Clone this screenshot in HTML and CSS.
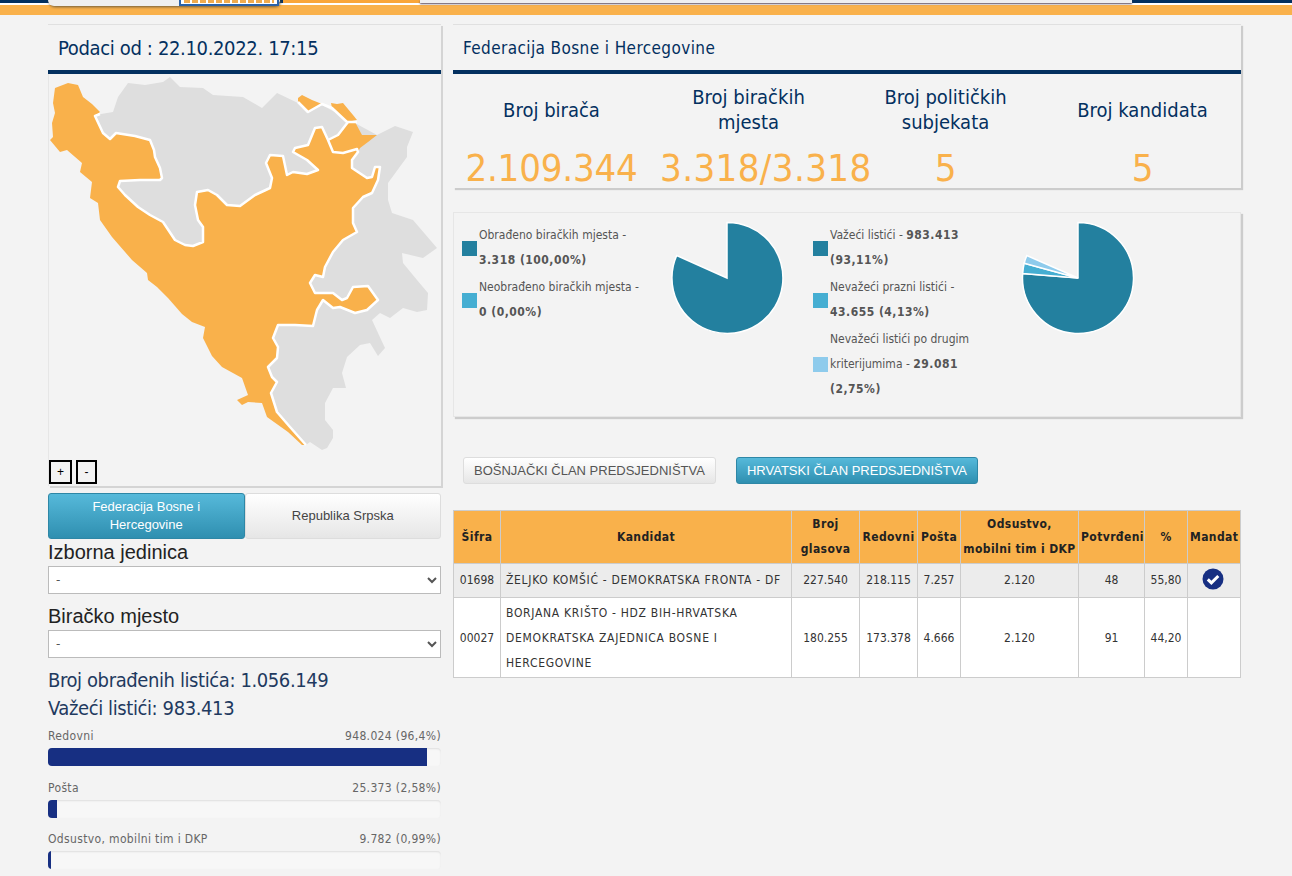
FILE: index.html
```html
<!DOCTYPE html>
<html>
  <head>
    <meta charset="utf-8">
    <link rel="stylesheet" href="styles.css">
  </head>
  <body>
    <div class="topbar">
      <div class="top-card"><div class="top-logo"><div class="top-logo-bits"></div></div></div>
      <div class="top-orange"></div>
      <div class="top-nav"></div>
    </div>

    <div class="content">
      <div class="left">
        <div class="panel map-panel">
          <div class="panel-head head-big">Podaci od : 22.10.2022. 17:15</div>
          <div class="map">
            <svg class="map-svg" viewBox="48 74 393 412" width="393" height="412">
              <path class="land-gray" d="M95 115 113 112 118 97 128 83 145 85 163 82 170 77 180 87 203 88 213 95 243 97 262 108 277 93 298 103 307 113 322 105 353 122 377 135 395 126 413 132 407 147 407 157 388 183 388 200 392 213 413 220 437 248 430 253 423 258 402 253 403 263 417 280 428 293 427 310 417 312 403 308 390 318 380 313 372 320 378 333 385 348 378 356 370 343 360 345 347 357 342 373 346 388 333 388 325 403 325 420 333 430 333 438 327 448 322 450 310 442 306 445 250 380 200 300 110 190 90 130Z"/>
              <path class="land-orange" d="M55 88 68 83 78 85 83 97 92 104 100 112 95 116 103 133 110 139 116 133 135 136 150 140 154 150 155 157 160 168 162 178 160 180 140 180 120 181 118 187 125 195 138 207 150 215 163 222 175 240 185 245 193 246 203 242 203 227 198 220 195 205 197 192 208 190 217 195 227 205 240 206 255 195 270 188 272 178 266 163 270 155 283 156 287 175 293 172 307 174 318 170 307 160 293 152 295 148 308 145 315 128 322 127 328 140 338 135 348 122 355 122 362 135 377 135 368 142 360 148 358 152 352 160 352 168 367 178 372 177 375 167 380 167 378 180 372 193 363 197 353 208 353 223 357 232 343 240 333 252 325 267 323 277 315 275 310 283 315 293 333 293 342 300 347 298 353 287 368 286 378 300 367 310 355 313 340 307 333 308 323 300 317 310 313 326 295 325 278 325 273 338 278 347 277 358 268 367 272 377 277 382 271 393 277 412 290 427 306 445 302 445 288 432 267 417 262 403 248 402 242 405 237 400 248 395 242 378 222 367 212 356 203 338 205 327 192 322 182 314 168 298 157 287 148 280 147 273 132 260 112 237 100 220 98 203 90 198 92 182 80 172 82 163 67 150 60 152 50 140 53 137 52 123 55 113 53 103Z"/>
              <path class="land-orange" d="M298 98 302 95 312 100 322 104 308 112 298 102Z"/>
              <path class="land-orange" d="M331 103 337 104 343 103 353 115 357 120 347 122 332 108Z"/>
              <path class="land-line" d="M100 114 95 116 103 133 110 139 116 133 135 136 150 140 154 150 155 157 160 168 162 178 160 180 140 180 120 181 118 187 125 195 138 207 150 215 163 222 175 240 185 245 193 246 203 242 203 227 198 220 195 205 197 192 208 190 217 195 227 205 240 206 255 195 270 188 272 178 266 163 270 155 283 156 287 175 293 172 307 174 318 170 307 160 293 152 295 148 308 145 315 128 322 127 328 140 333 152 343 153 357 149 358 152 352 160 352 168 367 178 372 177 375 167 380 167 378 180 372 193 363 197 353 208 353 223 357 232 343 240 333 252 325 267 323 277 315 275 310 283 315 293 333 293 342 300 347 298 353 287 368 286 378 300 367 310 355 313 340 307 333 308 323 300 317 310 313 326 295 325 278 325 273 338 278 347 277 358 268 367 272 377 277 382 271 393 277 412 290 427 306 445"/>
              <path class="land-line" d="M328 140 338 135 348 122"/>
              <path class="land-line" d="M298 102 308 112 322 104 332 108 347 122 357 122"/>
            </svg>
            <div class="zoom-btns">
              <span class="zoom-btn">+</span>
              <span class="zoom-btn zoom-minus">-</span>
            </div>
          </div>
        </div>

        <div class="entity-tabs">
          <div class="tab tab-active">Federacija Bosne i<br>Hercegovine</div>
          <div class="tab">Republika Srpska</div>
        </div>

        <div class="field-label">Izborna jedinica</div>
        <select class="field-select"><option>-</option></select>
        <div class="field-label second">Biračko mjesto</div>
        <select class="field-select"><option>-</option></select>

        <div class="count-line first">Broj obrađenih listića: 1.056.149</div>
        <div class="count-line">Važeći listići: 983.413</div>

        <div class="progress-row">
          <div class="progress-text"><span>Redovni</span><span>948.024 (96,4%)</span></div>
          <div class="progress"><div class="progress-fill" style="width: 96.4%"></div></div>
        </div>
        <div class="progress-row">
          <div class="progress-text"><span>Pošta</span><span>25.373 (2,58%)</span></div>
          <div class="progress"><div class="progress-fill" style="width: 2.4%"></div></div>
        </div>
        <div class="progress-row">
          <div class="progress-text"><span>Odsustvo, mobilni tim i DKP</span><span>9.782 (0,99%)</span></div>
          <div class="progress"><div class="progress-fill" style="width: 0.8%"></div></div>
        </div>
      </div>

      <div class="right">
        <div class="panel stats-panel">
          <div class="panel-head head-wide">Federacija Bosne i Hercegovine</div>
          <div class="stats">
            <div class="stat"><div class="stat-label">Broj birača</div><div class="stat-value">2.109.344</div></div>
            <div class="stat"><div class="stat-label">Broj biračkih<br>mjesta</div><div class="stat-value stat-wide">3.318/3.318</div></div>
            <div class="stat"><div class="stat-label">Broj političkih<br>subjekata</div><div class="stat-value">5</div></div>
            <div class="stat"><div class="stat-label">Broj kandidata</div><div class="stat-value">5</div></div>
          </div>
        </div>

        <div class="panel charts-panel">
          <div class="chart">
            <div class="legend">
              <div class="legend-row"><i class="swatch sw-dark"></i><div>Obrađeno biračkih mjesta -<br><b>3.318 (100,00%)</b></div></div>
              <div class="legend-row"><i class="swatch sw-mid"></i><div>Neobrađeno biračkih mjesta -<br><b>0 (0,00%)</b></div></div>
            </div>
            <svg class="pie" viewBox="0 0 114 114" width="114" height="114">
              <path class="slice-dark" d="M57 57 57 1.5A55.5 55.5 0 1 1 6.700 34.500Z"/>
            </svg>
          </div>
          <div class="chart">
            <div class="legend">
              <div class="legend-row"><i class="swatch sw-dark"></i><div>Važeći listići - <b>983.413</b><br><b>(93,11%)</b></div></div>
              <div class="legend-row"><i class="swatch sw-mid"></i><div>Nevažeći prazni listići -<br><b>43.655 (4,13%)</b></div></div>
              <div class="legend-row"><i class="swatch sw-light"></i><div>Nevažeći listići po drugim<br>kriterijumima - <b>29.081</b><br><b>(2,75%)</b></div></div>
            </div>
            <svg class="pie" viewBox="0 0 114 114" width="114" height="114">
              <path class="slice-dark" d="M57 57 57 1.5A55.5 55.5 0 1 1 1.700 52.500Z"/>
              <path class="slice-mid" d="M57 57 1.700 52.500A55.5 55.5 0 0 1 3.200 42.300Z"/>
              <path class="slice-light" d="M57 57 3.200 42.300A55.5 55.5 0 0 1 5.800 34.500Z"/>
            </svg>
          </div>
        </div>

        <div class="member-btns">
          <div class="member-btn">BOŠNJAČKI ČLAN PREDSJEDNIŠTVA</div>
          <div class="member-btn member-active">HRVATSKI ČLAN PREDSJEDNIŠTVA</div>
        </div>

        <table class="results">
          <thead>
            <tr>
              <th class="c-code">Šifra</th>
              <th class="c-name">Kandidat</th>
              <th class="c-votes">Broj<br>glasova</th>
              <th class="c-reg">Redovni</th>
              <th class="c-post">Pošta</th>
              <th class="c-abs">Odsustvo,<br>mobilni tim i DKP</th>
              <th class="c-conf">Potvrđeni</th>
              <th class="c-pct">%</th>
              <th class="c-man">Mandat</th>
            </tr>
          </thead>
          <tbody>
            <tr class="row-grey">
              <td>01698</td>
              <td class="name">ŽELJKO KOMŠIĆ - DEMOKRATSKA FRONTA - DF</td>
              <td>227.540</td><td>218.115</td><td>7.257</td><td>2.120</td><td>48</td><td>55,80</td>
              <td class="mandat">
                <svg class="check" viewBox="0 0 22 22" width="22" height="22">
                  <circle cx="11" cy="11" r="10.5" fill="#172f82"/>
                  <path d="M5.800 11.300 9.400 14.800 16.300 8" fill="none" stroke="#fff" stroke-width="3"/>
                </svg>
              </td>
            </tr>
            <tr class="row-tall">
              <td>00027</td>
              <td class="name">BORJANA KRIŠTO - HDZ BIH-HRVATSKA<br>DEMOKRATSKA ZAJEDNICA BOSNE I<br>HERCEGOVINE</td>
              <td>180.255</td><td>173.378</td><td>4.666</td><td>2.120</td><td>91</td><td>44,20</td>
              <td></td>
            </tr>
          </tbody>
        </table>
      </div>
    </div>
  </body>
</html>
```

FILE: styles.css
```css
* {
  box-sizing: border-box;
}

body {
  margin: 0;
  background: #f3f3f3;
  font-family: "DejaVu Sans Condensed", "DejaVu Sans", sans-serif;
  font-size: 12px;
  color: #555;
  overflow: hidden;
}

/* Top strip, cut off by the scroll position */
.topbar {
  position: relative;
  height: 15px;
  background: #f9b14b;
  border-top: 3px solid #03305f;
  box-shadow: inset 0 2px 0 #fff;
}

.top-card {
  position: absolute;
  top: -3px;
  left: 48px;
  width: 232px;
  height: 6px;
  background: #efefef;
  border-radius: 0 0 6px 6px;
  box-shadow: 1px 1px 3px #6b5a3a;
}

.top-logo {
  position: absolute;
  left: 131px;
  top: 0;
  width: 100px;
  height: 6px;
  padding: 0 3px;
  background: #fff;
  border: 2px solid #2a62a8;
  border-top: 0;
}

.top-logo-bits {
  height: 3px;
  background: repeating-linear-gradient(90deg, #f0ab4e 0 6px, #fff 6px 8px);
}

.top-orange {
  position: absolute;
  top: -3px;
  left: 283px;
  width: 137px;
  height: 3px;
  background: #f9a63a;
}

.top-nav {
  position: absolute;
  top: -3px;
  left: 420px;
  width: 712px;
  height: 3px;
  background: #efefef;
  box-shadow: 0 1px 2px #5a4a5a;
}

.content {
  display: flex;
  gap: 12px;
  padding: 9px 0 0 48px;
}

.left {
  width: 393px;
}

.right {
  width: 788px;
}

/* Panels */
.panel {
  background: #f3f3f3;
  border-top: 1px solid #e0e0e0;
  box-shadow: 2px 2px 1px #ccc;
}

.panel-head {
  height: 49px;
  padding: 0 10px;
  border-bottom: 4px solid #03305f;
  font-size: 16px;
  line-height: 46px;
  color: #03305f;
}

.head-big {
  font-size: 20px;
  letter-spacing: -0.35px;
}

.head-wide {
  font-size: 17px;
  letter-spacing: 0.4px;
}

.map-panel {
  height: 462px;
  box-shadow: 2px 2px 0 #d4d4d4;
}

.map {
  position: relative;
  height: 412px;
  border-left: 1px solid #e6e6e6;
}

.map-svg {
  display: block;
  margin-left: -1px;
}

.land-gray {
  fill: #dedede;
}

.land-orange {
  fill: #f9b14b;
}

.land-line {
  fill: none;
  stroke: #fff;
  stroke-width: 2.5;
  stroke-linejoin: round;
}

.zoom-btns {
  position: absolute;
  left: 0;
  bottom: 2px;
  display: flex;
  gap: 4px;
}

.zoom-btn {
  width: 23px;
  height: 24px;
  border: 2px solid #000;
  background: #f3f3f3;
  font: 12px/20px "Liberation Sans", sans-serif;
  text-align: center;
  color: #000;
}

.zoom-minus {
  width: 21px;
}

/* Left column controls */
.entity-tabs {
  display: flex;
  margin-top: 7px;
  font-family: "Liberation Sans", sans-serif;
  font-size: 13px;
  line-height: 18px;
  text-align: center;
}

.tab {
  flex: 1;
  height: 46px;
  display: flex;
  align-items: center;
  justify-content: center;
  border: 1px solid #ddd;
  border-radius: 3px;
  background: linear-gradient(to bottom, #fff, #e6e6e6);
  color: #444;
}

.tab-active {
  border-color: #2e87a6;
  background: linear-gradient(to bottom, #56b9da, #2f8fb0);
  color: #fff;
}

.field-label {
  font-family: "Liberation Sans", sans-serif;
  font-size: 20px;
  line-height: 27px;
  color: #222;
}

.field-label.second {
  margin-top: 9px;
}

.field-select {
  display: block;
  width: 100%;
  height: 28px;
  padding: 0 3px;
  background-color: #fff;
  border: 1px solid #bbb;
  font-family: "DejaVu Sans", sans-serif;
  font-size: 12px;
  color: #555;
}

.count-line {
  font-size: 20px;
  line-height: 28px;
  letter-spacing: -0.4px;
  color: #1f3a5f;
}

.count-line.first {
  margin-top: 8px;
}

.progress-row {
  height: 51.5px;
}

.progress-text {
  display: flex;
  justify-content: space-between;
  height: 26px;
  padding-top: 7px;
  line-height: 15px;
  letter-spacing: 0.35px;
  color: #666;
}

.progress {
  height: 18px;
  background: #f7f7f7;
  border-radius: 4px;
  box-shadow: inset 0 1px 2px rgba(0, 0, 0, 0.1);
  overflow: hidden;
}

.progress-fill {
  height: 100%;
  background: #172f82;
}

/* Stats */
.stats-panel {
  height: 164px;
}

.stats {
  display: grid;
  grid-template-columns: repeat(4, 1fr);
  padding-top: 10px;
  text-align: center;
  color: #03305f;
}

.stat {
  display: flex;
  flex-direction: column;
  min-width: 0;
}

.stat-label {
  height: 52px;
  display: flex;
  align-items: center;
  justify-content: center;
  font-size: 20px;
  line-height: 25px;
}

.stat-value {
  margin-top: 12px;
  font-size: 38px;
  line-height: 40px;
  letter-spacing: -0.2px;
  color: #f9b14b;
  white-space: nowrap;
}

.stat-wide {
  padding-left: 10px;
  text-align: left;
  letter-spacing: 0.4px;
}

/* Pies */
.charts-panel {
  display: grid;
  grid-template-columns: 351px 351px;
  height: 205px;
  margin-top: 24px;
  padding: 8px 8px;
  border: 1px solid #e6e6e6;
}

.chart {
  display: flex;
  align-items: flex-start;
}

.legend {
  width: 208px;
  margin-top: 2px;
}

.legend-row {
  display: flex;
  align-items: center;
  gap: 2px;
  margin-bottom: 2px;
  line-height: 25px;
}

.legend b {
  letter-spacing: 0.5px;
}

.swatch {
  flex: none;
  width: 15px;
  height: 15px;
}

.sw-dark {
  background: #23809f;
}

.sw-mid {
  background: #45aed2;
}

.sw-light {
  background: #8ecbec;
}

.pie path {
  stroke: #fff;
  stroke-width: 1.5;
}

.slice-dark {
  fill: #23809f;
}

.slice-mid {
  fill: #45aed2;
}

.slice-light {
  fill: #8ecbec;
}

/* Member buttons */
.member-btns {
  display: flex;
  gap: 20px;
  margin: 40px 0 26px 10px;
}

.member-btn {
  height: 27px;
  padding: 0 10px;
  border: 1px solid #ddd;
  border-radius: 3px;
  background: linear-gradient(to bottom, #fff, #e6e6e6);
  font: 13px/25px "Liberation Sans", sans-serif;
  color: #555;
}

.member-active {
  border-color: #2e87a6;
  background: linear-gradient(to bottom, #56b9da, #2f8fb0);
  color: #fff;
}

/* Results table */
.results {
  width: 787px;
  table-layout: fixed;
  border-collapse: collapse;
  text-align: center;
  background: #fff;
}

.results th,
.results td {
  border: 1px solid #ccc;
  padding: 0 2px;
  line-height: 25px;
  color: #333;
}

.results th {
  height: 53px;
  background: #f9b14b;
  font-weight: bold;
  letter-spacing: 0.4px;
  color: #222;
}

.c-code { width: 47px; }
.c-name { width: 291px; }
.c-votes { width: 68px; }
.c-reg { width: 58px; }
.c-post { width: 43px; }
.c-abs { width: 118px; }
.c-conf { width: 66px; }
.c-pct { width: 43px; }
.c-man { width: 53px; }

.row-grey td {
  height: 34px;
  background: #ececec;
}

.row-tall td {
  height: 80px;
  padding-top: 2px;
}

.results .name {
  padding: 0 5px;
  text-align: left;
  letter-spacing: 0.7px;
}

.row-tall .name {
  padding-top: 2px;
}

.mandat {
  line-height: 0;
}

.check {
  display: block;
  margin: 0 0 4px 12px;
}
```
